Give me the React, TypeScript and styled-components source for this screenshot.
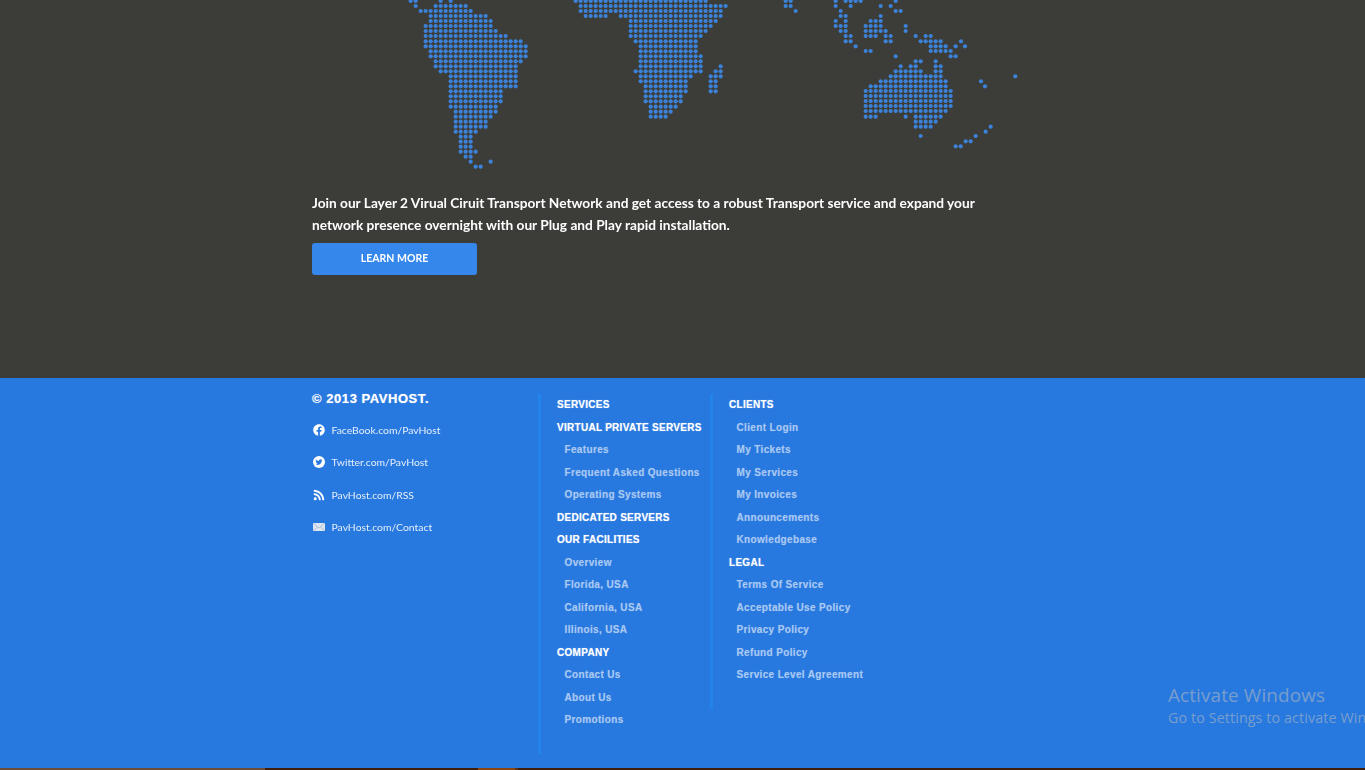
import React from "react";
import styled, { createGlobalStyle } from "styled-components";
import { FaFacebook, FaRss } from "react-icons/fa";

const Global = createGlobalStyle`
  html, body { margin: 0; padding: 0; height: 770px; overflow: hidden; background: #2879df; }
  #root { height: 770px; }
  * { box-sizing: border-box; }
`;

const Page = styled.div`
  position: relative;
  height: 770px;
  overflow: hidden;
  display: flex;
  flex-direction: column;
`;
const Hero = styled.section`
  height: 378px;
  background: #3c3c38;
`;
const Container = styled.div`
  width: 741px;
  margin: 0 auto;
`;
const MapSvg = styled.svg`
  display: block;
  width: 741px;
  height: 192px;
  filter: blur(0.25px);
`;
const Lead = styled.p`
  margin: 0 0 8px;
  font: 700 13.7px/21.5px Lato, sans-serif;
  color: #fff;
  width: 680px;
  filter: blur(0.3px);
`;
const LearnMore = styled.a`
  display: flex;
  align-items: center;
  justify-content: center;
  width: 165px;
  height: 32px;
  border-radius: 3px;
  background: #3687ec;
  color: #fff;
  font: 700 10.5px Lato, sans-serif;
  padding-bottom: 2px;
  filter: blur(0.2px);
`;
const Footer = styled.footer`
  flex: 1;
  background: #2879df;
  padding-top: 16px;
`;
const FooterGrid = styled(Container)`
  display: flex;
  align-items: flex-start;
`;
const Brand = styled.div`
  width: 226px;
`;
const Copyright = styled.div`
  font: 700 13px/10px "Liberation Sans", sans-serif;
  letter-spacing: 0.55px;
  color: #fff;
  margin: 0 0 10px;
  text-shadow: 0 0 1px rgba(255, 255, 255, 0.6);
`;
const SocialRow = styled.div`
  display: flex;
  align-items: center;
  height: 32.25px;
  gap: 6.5px;
  color: #e4eefb;
  font: 400 10.4px Lato, sans-serif;
  filter: blur(0.2px);
  svg { width: 12px; height: 12px; flex: none; margin-left: 1px; }
`;
const Column = styled.nav<{ $width?: number }>`
  width: ${p => (p.$width ? `${p.$width}px` : "auto")};
  border-left: 3px solid #2283ea;
  padding: 0 0 22px 16px;
`;
const NavRow = styled.div<{ $head?: boolean }>`
  height: 22.5px;
  line-height: 22.5px;
  white-space: nowrap;
  font-family: "Liberation Sans", sans-serif;
  font-weight: 700;
  font-size: 10px;
  letter-spacing: ${p => (p.$head ? "0.28px" : "0.35px")};
  padding-left: ${p => (p.$head ? "0" : "7.5px")};
  color: ${p => (p.$head ? "#fff" : "#a9c9f3")};
  text-shadow: 0 0 1px ${p => (p.$head ? "rgba(255,255,255,.55)" : "rgba(169,201,243,.4)")};
`;
const Strip = styled.div`
  display: flex;
  height: 2px;
  flex: none;
  background: #3f1f0c;
`;
const StripPart = styled.span<{ $w: number; $c: string }>`
  width: ${p => p.$w}px;
  background: ${p => p.$c};
`;
const Watermark = styled.div`
  position: absolute;
  left: 1168px;
  top: 683px;
  white-space: nowrap;
  color: rgba(190, 190, 190, 0.55);
  font-family: "Open Sans", sans-serif;
`;
const WatermarkTitle = styled.div`
  font-size: 18.9px;
  line-height: 25px;
  letter-spacing: 0.13px;
`;
const WatermarkSub = styled.div`
  font-size: 14.3px;
  line-height: 20px;
  letter-spacing: 0.1px;
`;

// Each row: zoomed y, then "from-to" runs; coordinates are in 3x crop units.
const west: [number, string][] = [
  [3, "32-47 122 152 527-917"], [18, "47 107-197 542-977"], [33, "62-212 542-962"],
  [48, "92-257 557-617 662-962"], [63, "92-272 692-947"], [78, "77-272 692-932"],
  [93, "77-287 692-917"], [108, "77-317 692-902"], [124, "77-362 707-887"],
  [139, "77-377 722-887"], [154, "92-377 722-887"], [169, "92-377 722-902"],
  [184, "107-362 722-902"], [199, "107-347 722-902 962"], [214, "122-347 707-902 947-962"],
  [229, "152-347 722-872 932-962"], [244, "152-347 722-857 932-947"],
  [259, "152-347 737-857 932-947"], [274, "152-302 737-857 932-947"],
  [289, "152-302 737-842"], [304, "152-302 737-842"], [320, "152-287 752-827"],
  [335, "167-287 752-812"], [350, "167-272 752-797"], [365, "167-257"], [380, "167-257"],
  [395, "167-227"], [410, "182-212"], [425, "182-212"], [440, "182-212"], [455, "182-227"],
  [470, "197-212"], [485, "212 272"], [500, "227-242"],
];
const east: [number, string][] = [
  [3, "47-62 197 227-272 377"], [18, "47-62 197 242 332 362"], [33, "77 212 377-392"],
  [48, "212-227 332"], [63, "197 227 302-332"], [78, "197-227 287-332 407"],
  [93, "212-227 287-347 407"], [108, "227-242 287-317 347-362 437 467-482"],
  [124, "227-242 347-362 452-512 573"], [139, "257 482-527 557 585"],
  [153, "287-302 482-542"], [169, "377 542-557"], [184, "437-452 497"],
  [199, "392 422-437 497-512"], [214, "377-452 497-512"], [229, "362-512 736"],
  [244, "332-527 633"], [259, "302-527 645"], [273, "287-542"], [288, "287-542"],
  [303, "287-542"], [318, "287-542"], [333, "287-527"], [350, "287-317 407 437-512"],
  [365, "437-497"], [380, "437-482 662"], [395, "647"], [408, "452 617"],
  [424, "587-602"], [439, "557-572"],
];

function dots(rows: [number, string][], ox: number) {
  const out: { x: number; y: number }[] = [];
  rows.forEach(([y, runs]) => {
    runs.split(" ").forEach(run => {
      const [a, b] = run.split("-").map(Number);
      for (let x = a; x <= (b ?? a); x += 15) out.push({ x: ox + x / 3, y: y / 3 });
    });
  });
  return out;
}
const allDots = [...dots(west, 400), ...dots(east, 770)];

const TwitterIcon = () => (
  <svg viewBox="0 0 24 24">
    <circle cx="12" cy="12" r="12" fill="#fff" />
    <g transform="translate(5 5.2) scale(.58)">
      <path fill="#2879df" d="M23.953 4.57a10 10 0 01-2.825.775 4.958 4.958 0 002.163-2.723c-.951.555-2.005.959-3.127 1.184a4.92 4.92 0 00-8.384 4.482C7.69 8.095 4.067 6.13 1.64 3.162a4.822 4.822 0 00-.666 2.475c0 1.71.87 3.213 2.188 4.096a4.904 4.904 0 01-2.228-.616v.06a4.923 4.923 0 003.946 4.827 4.996 4.996 0 01-2.212.085 4.936 4.936 0 004.604 3.417 9.867 9.867 0 01-6.102 2.105c-.39 0-.779-.023-1.17-.067a13.995 13.995 0 007.557 2.209c9.053 0 13.998-7.496 13.998-13.985 0-.21 0-.42-.015-.63A9.935 9.935 0 0024 4.59z" />
    </g>
  </svg>
);
const MailIcon = () => (
  <svg viewBox="0 0 24 24">
    <rect x="0" y="4" width="24" height="16" rx="2" fill="#dbe6f2" />
    <path d="M1 5l11 9 11-9M1 19l8-7M23 19l-8-7" fill="none" stroke="#9fb4cc" strokeWidth="1.4" />
  </svg>
);

const services: [string, boolean][] = [
  ["SERVICES", true], ["VIRTUAL PRIVATE SERVERS", true], ["Features", false],
  ["Frequent Asked Questions", false], ["Operating Systems", false], ["DEDICATED SERVERS", true],
  ["OUR FACILITIES", true], ["Overview", false], ["Florida, USA", false], ["California, USA", false],
  ["Illinois, USA", false], ["COMPANY", true], ["Contact Us", false], ["About Us", false], ["Promotions", false],
];
const clients: [string, boolean][] = [
  ["CLIENTS", true], ["Client Login", false], ["My Tickets", false], ["My Services", false],
  ["My Invoices", false], ["Announcements", false], ["Knowledgebase", false], ["LEGAL", true],
  ["Terms Of Service", false], ["Acceptable Use Policy", false], ["Privacy Policy", false],
  ["Refund Policy", false], ["Service Level Agreement", false],
];

export default function App() {
  return (
    <Page>
      <Global />
      <Hero>
        <Container>
          <MapSvg viewBox="312 0 741 192">
            {allDots.map((d, i) => (
              <circle key={i} cx={d.x} cy={d.y} r="2.1" fill="#3b82d8" />
            ))}
          </MapSvg>
          <Lead>
            Join our Layer 2 Virual Ciruit Transport Network and get access to a robust Transport service and expand your network presence overnight with our Plug and Play rapid installation.
          </Lead>
          <LearnMore>LEARN MORE</LearnMore>
        </Container>
      </Hero>
      <Footer>
        <FooterGrid>
          <Brand>
            <Copyright>© 2013 PAVHOST.</Copyright>
            <SocialRow><FaFacebook color="#fff" />FaceBook.com/PavHost</SocialRow>
            <SocialRow><TwitterIcon />Twitter.com/PavHost</SocialRow>
            <SocialRow><FaRss color="#fff" />PavHost.com/RSS</SocialRow>
            <SocialRow><MailIcon />PavHost.com/Contact</SocialRow>
          </Brand>
          <Column $width={172}>
            {services.map(([t, h]) => <NavRow key={t} $head={h}>{t}</NavRow>)}
          </Column>
          <Column>
            {clients.map(([t, h]) => <NavRow key={t} $head={h}>{t}</NavRow>)}
          </Column>
        </FooterGrid>
      </Footer>
      <Strip>
        <StripPart $w={265} $c="#6b4d3a" />
        <StripPart $w={213} $c="#3f1f0c" />
        <StripPart $w={37} $c="#8a4512" />
        <StripPart $w={3} $c="#5a3318" />
      </Strip>
      <Watermark>
        <WatermarkTitle>Activate Windows</WatermarkTitle>
        <WatermarkSub>Go to Settings to activate Windows.</WatermarkSub>
      </Watermark>
    </Page>
  );
}
